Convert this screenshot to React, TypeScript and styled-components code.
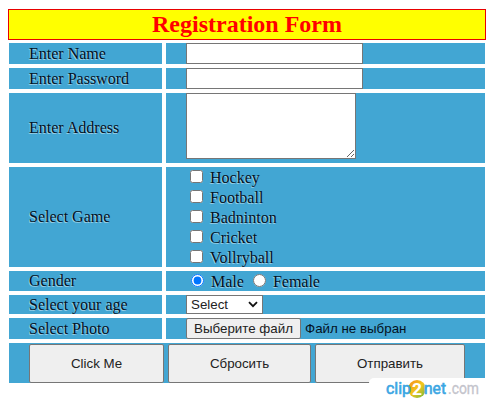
import React from "react";
import styled, { createGlobalStyle } from "styled-components";

const GlobalStyle = createGlobalStyle`
  * { box-sizing: border-box; }
  body { margin: 0; background: #fff; overflow: hidden; }
`;

const Page = styled.main`
  position: relative;
  width: 494px;
  height: 400px;
  padding: 9px 8px 0;
  font: 16px/20px "Liberation Serif", serif;
  color: #04121f;
`;

const Title = styled.h1`
  height: 31px;
  margin: 0 0 3px;
  border: 1px solid #e80000;
  background: #ff0;
  color: #f00;
  font-size: 24px;
  line-height: 28px;
  text-align: center;
`;

const Form = styled.form`
  display: grid;
  grid-template-columns: 153px 319px;
  grid-template-rows: 21px 21px 70px 100px 20px 19px 21px 40px;
  gap: 4px;
  padding: 0 1px;
`;

const Label = styled.div<{ $shift?: number }>`
  display: flex;
  align-items: center;
  padding-left: 20px;
  padding-top: ${(p) => p.$shift ?? 0}px;
  background: #42a6d3;
  text-shadow: -1px 1px 0 rgba(255, 255, 255, 0.45);
  white-space: nowrap;
`;

const Field = styled.div`
  display: flex;
  align-items: flex-start;
  padding-left: 20px;
  background: #42a6d3;
  white-space: nowrap;
`;

const TextInput = styled.input`
  width: 177px;
  height: 21px;
  border: 1px solid #767676;
  border-radius: 0;
  background: #fff;
  outline: none;
`;

const AddressInput = styled.textarea`
  width: 170px;
  height: 66px;
  margin: 0;
  border: 1px solid #767676;
  border-radius: 0;
  background: #fff;
  outline: none;
`;

const GameList = styled.div`
  display: flex;
  flex-direction: column;
`;

const Option = styled.label`
  display: flex;
  align-items: flex-start;
  height: 20px;
`;

const OptionText = styled.span`
  margin: 1px 0 0 7px;
  text-shadow: -1px 1px 0 rgba(255, 255, 255, 0.45);
`;

const Checkbox = styled.input`
  width: 13px;
  height: 13px;
  margin: 3px 0 0 4px;
`;

const Radio = styled.input<{ $left: number }>`
  width: 13px;
  height: 13px;
  margin: 3px 0 0 ${(p) => p.$left}px;
`;

const SelectBox = styled.button`
  display: flex;
  justify-content: space-between;
  align-items: center;
  width: 77px;
  height: 19px;
  padding: 0 4px;
  border: 1px solid #767676;
  border-radius: 0;
  background: #fff;
  color: #222;
  font: 13.33px/17px "Liberation Sans", sans-serif;
`;

const FileButton = styled.button`
  width: 115px;
  height: 21px;
  padding: 0;
  border: 1px solid #767676;
  border-radius: 2px;
  background: #efefef;
  color: #222;
  font: 13.33px/17px "Liberation Sans", sans-serif;
`;

const FileStatus = styled.span`
  margin: 1px 0 0 4px;
  font: 13.33px/20px "Liberation Sans", sans-serif;
`;

const Actions = styled.div`
  grid-column: 1 / -1;
  display: flex;
  gap: 4px;
  padding: 1px 0 0 20px;
  background: #42a6d3;
`;

const ActionButton = styled.button<{ $width: number }>`
  width: ${(p) => p.$width}px;
  height: 39px;
  padding: 0;
  border: 1px solid #767676;
  border-radius: 2px;
  background: #efefef;
  color: #222;
  font: 13.33px/17px "Liberation Sans", sans-serif;
`;

const Watermark = styled.div`
  position: absolute;
  left: 369px;
  top: 378px;
  width: 125px;
  height: 22px;
  border-radius: 5px 0 0 0;
  background: #fff;
`;

const games = ["Hockey", "Football", "Badninton", "Cricket", "Vollryball"];

export default function App() {
  return (
    <>
      <GlobalStyle />
      <Page>
        <Title>Registration Form</Title>
        <Form>
          <Label $shift={1}>Enter Name</Label>
          <Field><TextInput type="text" /></Field>
          <Label $shift={1}>Enter Password</Label>
          <Field><TextInput type="password" /></Field>
          <Label>Enter Address</Label>
          <Field><AddressInput /></Field>
          <Label>Select Game</Label>
          <Field>
            <GameList>
              {games.map((game) => (
                <Option key={game}>
                  <Checkbox type="checkbox" />
                  <OptionText>{game}</OptionText>
                </Option>
              ))}
            </GameList>
          </Field>
          <Label>Gender</Label>
          <Field>
            <Option>
              <Radio type="radio" name="gender" $left={5} defaultChecked />
              <OptionText>Male</OptionText>
            </Option>
            <Option>
              <Radio type="radio" name="gender" $left={9} />
              <OptionText>Female</OptionText>
            </Option>
          </Field>
          <Label>Select your age</Label>
          <Field>
            <SelectBox type="button">
              Select
              <svg width="10" height="7" viewBox="0 0 10 7" fill="none" stroke="#111" strokeWidth="1.8">
                <path d="M1 1.2 5 5.2 9 1.2" />
              </svg>
            </SelectBox>
          </Field>
          <Label>Select Photo</Label>
          <Field>
            <FileButton type="button">Выберите файл</FileButton>
            <FileStatus>Файл не выбран</FileStatus>
          </Field>
          <Actions>
            <ActionButton type="button" $width={135}>Click Me</ActionButton>
            <ActionButton type="reset" $width={143}>Сбросить</ActionButton>
            <ActionButton type="button" $width={150}>Отправить</ActionButton>
          </Actions>
        </Form>
        <Watermark>
          <svg width="125" height="22" fontFamily="Roboto, sans-serif" fontSize="16">
            <defs>
              <linearGradient id="badge" x1="0" y1="0" x2="1" y2="1">
                <stop offset="0" stopColor="#f58a1f" />
                <stop offset="0.5" stopColor="#f3c51b" />
                <stop offset="1" stopColor="#63b846" />
              </linearGradient>
            </defs>
            <circle cx="48" cy="11" r="9" fill="url(#badge)" />
            <text x="17" y="16" fill="#3ba6e3" stroke="#3ba6e3" strokeWidth="0.6" textLength="25" lengthAdjust="spacingAndGlyphs">clip</text>
            <text x="43" y="17" fill="#fff" fontWeight="700" fontSize="17" textLength="10" lengthAdjust="spacingAndGlyphs">2</text>
            <text x="55" y="16" fill="#3ba6e3" stroke="#3ba6e3" strokeWidth="0.6" textLength="22" lengthAdjust="spacingAndGlyphs">net</text>
            <text x="79" y="16" fill="#c4c4cc" stroke="#c4c4cc" strokeWidth="0.3" textLength="31" lengthAdjust="spacingAndGlyphs">.com</text>
          </svg>
        </Watermark>
      </Page>
    </>
  );
}
